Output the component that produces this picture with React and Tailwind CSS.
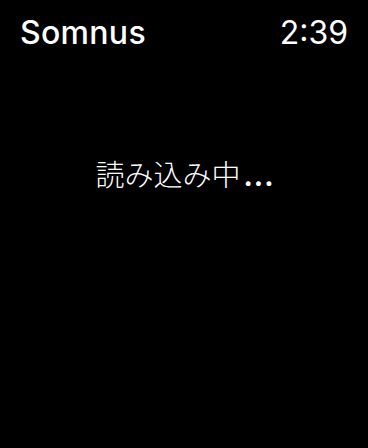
import React from "react";

export default function App() {
  return (
    <div className="w-[368px] h-[448px] bg-black text-white flex flex-col font-['Inter','Noto_Sans_CJK_JP',sans-serif]">
      <div className="flex items-center justify-between px-5 pt-[16px] h-[50px]">
        <span className="text-[32px] leading-none font-medium tracking-[0.3px]">Somnus</span>
        <span className="text-[32px] leading-none font-normal">2:39</span>
      </div>
      <div className="flex justify-center items-baseline pt-[109px] pl-[2px]">
        <span className="text-[29px] leading-none font-['Noto_Sans_CJK_JP',sans-serif] font-light">
          読み込み中
        </span>
        <span className="text-[28px] leading-none font-bold font-['Inter',sans-serif] tracking-[1px] ml-[3px]">
          ...
        </span>
      </div>
    </div>
  );
}
